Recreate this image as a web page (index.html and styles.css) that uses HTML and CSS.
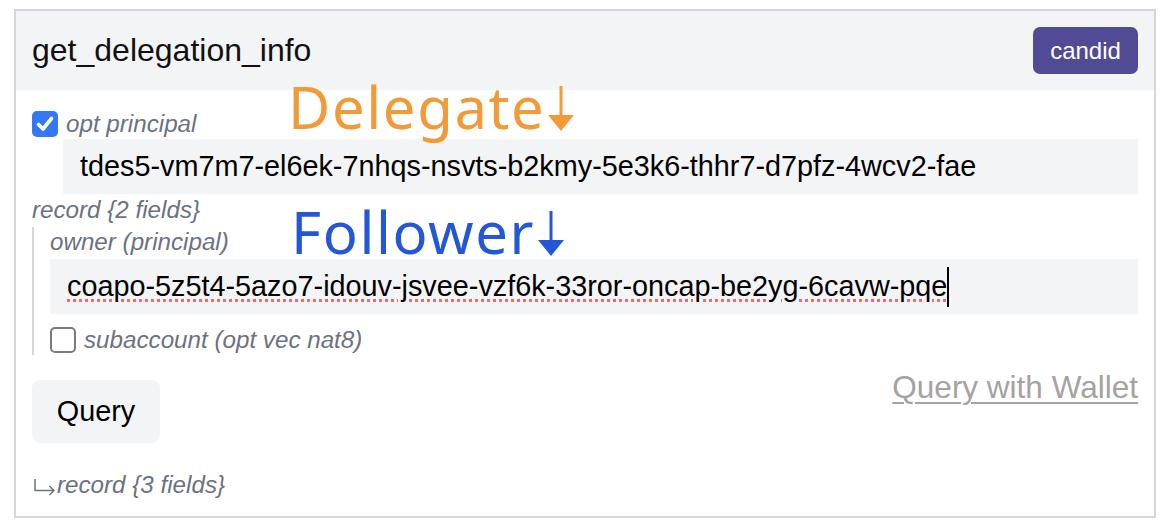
FILE: index.html
```html
<!DOCTYPE html>
<html lang="en">
<head>
<meta charset="utf-8">
<title>get_delegation_info</title>
<link rel="stylesheet" href="styles.css">
</head>
<body>
<div class="card">
  <div class="header">
    <h1 class="title">get_delegation_info</h1>
    <button class="badge">candid</button>
  </div>
  <div class="body">
    <div class="opt-row">
      <span class="check checked">
        <svg viewBox="0 0 26 26" width="26" height="26"><path d="M6.5 13.5 L11 18 L19.5 7.5" fill="none" stroke="#fff" stroke-width="3.6" stroke-linecap="round" stroke-linejoin="round"/></svg>
      </span>
      <span class="label">opt principal</span>
    </div>
    <div class="field indent">tdes5-vm7m7-el6ek-7nhqs-nsvts-b2kmy-5e3k6-thhr7-d7pfz-4wcv2-fae</div>
    <div class="label record-label">record {2 fields}</div>
    <div class="record">
      <div class="label">owner (principal)</div>
      <div class="field"><span class="misspelled">coapo-5z5t4-5azo7-idouv-jsvee-vzf6k-33ror-oncap-be2yg-6cavw-pqe</span><span class="caret"></span></div>
      <div class="opt-row sub">
        <span class="check"></span>
        <span class="label">subaccount (opt vec nat8)</span>
      </div>
    </div>
    <div class="actions">
      <button class="query">Query</button>
      <a class="wallet" href="#">Query with Wallet</a>
    </div>
    <div class="label result"><svg class="hook" viewBox="0 0 24 18" width="24" height="18"><path d="M2 1 V12.5 H21 M16.5 8 L21 12.5 L16.5 17" fill="none" stroke="#6b7280" stroke-width="1.5" stroke-linejoin="round"/></svg>record {3 fields}</div>
  </div>
  <div class="note delegate">Delegate<svg class="arrow" viewBox="0 0 28 46" width="28" height="46"><path d="M14 0 V32" stroke="currentColor" stroke-width="3"/><path d="M1 29 H27 L14 45 Z" fill="currentColor"/></svg></div>
  <div class="note follower">Follower<svg class="arrow" viewBox="0 0 28 46" width="28" height="46"><path d="M14 0 V32" stroke="currentColor" stroke-width="3"/><path d="M1 29 H27 L14 45 Z" fill="currentColor"/></svg></div>
</div>
</body>
</html>
```
FILE: styles.css
```css
* { box-sizing: border-box; }

body {
  margin: 0;
  background: #ffffff;
  font-family: "Liberation Sans", Arial, Helvetica, sans-serif;
  color: #111111;
}

.card {
  position: relative;
  margin: 9px 0 0 14px;
  width: 1142px;
  border: 2px solid #d4d6db;
  background: #ffffff;
}

.header {
  height: 79px;
  padding: 0 16px;
  background: #f3f4f6;
  display: flex;
  align-items: center;
  justify-content: space-between;
}

.title {
  margin: 0;
  font-size: 32px;
  font-weight: 400;
  color: #111111;
}

.badge {
  width: 105px;
  height: 47px;
  border: none;
  border-radius: 7px;
  background: #514a94;
  color: #ffffff;
  font-family: inherit;
  font-size: 24px;
  padding: 0;
}

.body {
  padding: 19px 16px 17px 16px;
  display: flex;
  flex-direction: column;
}

.label {
  font-size: 24.2px;
  line-height: 29px;
  font-style: italic;
  color: #6b7280;
}

.opt-row {
  display: flex;
  align-items: center;
  gap: 8px;
  height: 29px;
}

.check {
  width: 26px;
  height: 26px;
  border-radius: 5px;
  border: 2px solid #7a7b7e;
  background: #ffffff;
  display: flex;
  flex: none;
}

.check.checked {
  border: none;
  background: #3478f6;
}

.field {
  height: 55px;
  padding: 0 17px;
  background: #f3f4f6;
  display: flex;
  align-items: center;
  font-size: 28.8px;
  color: #000000;
  white-space: nowrap;
}

.field.indent {
  margin-left: 31px;
  margin-top: 1px;
}

.misspelled {
  text-decoration: underline dotted #ef6a6a;
  text-decoration-thickness: 3px;
  text-underline-offset: 3px;
}

.caret {
  display: inline-block;
  width: 2px;
  height: 40px;
  background: #000000;
}

.record-label {
  margin-top: 1px;
}

.record {
  margin-top: 3px;
  border-left: 2px solid #d4d6db;
  padding-left: 16px;
  padding-bottom: 1px;
  display: flex;
  flex-direction: column;
}

.record .field {
  margin-top: 3px;
}

.opt-row.sub {
  margin-top: 11px;
}

.actions {
  margin-top: 15px;
  display: flex;
  justify-content: space-between;
  align-items: flex-start;
}

.query {
  margin-top: 10px;
  width: 128px;
  height: 63px;
  border: none;
  border-radius: 8px;
  background: #f3f4f6;
  color: #000000;
  font-family: inherit;
  font-size: 28.8px;
  padding: 0;
}

.wallet {
  font-size: 31.5px;
  line-height: 34px;
  color: #a5a2a2;
  text-decoration: underline;
  text-decoration-thickness: 2px;
  text-underline-offset: 4px;
}

.result {
  margin-top: 27px;
  display: flex;
  align-items: center;
}

.hook {
  margin: 4px 0 0 1px;
  flex: none;
}

.note {
  position: absolute;
  font-family: "Noto Sans", "DejaVu Sans", sans-serif;
  font-size: 58px;
  line-height: 1;
  letter-spacing: 1.6px;
  white-space: nowrap;
}

.note .arrow {
  vertical-align: -3px;
  margin-left: 2px;
}

.delegate {
  left: 272px;
  top: 67px;
  color: #f39a38;
}

.follower {
  left: 275px;
  top: 192px;
  color: #2357d6;
}
```
